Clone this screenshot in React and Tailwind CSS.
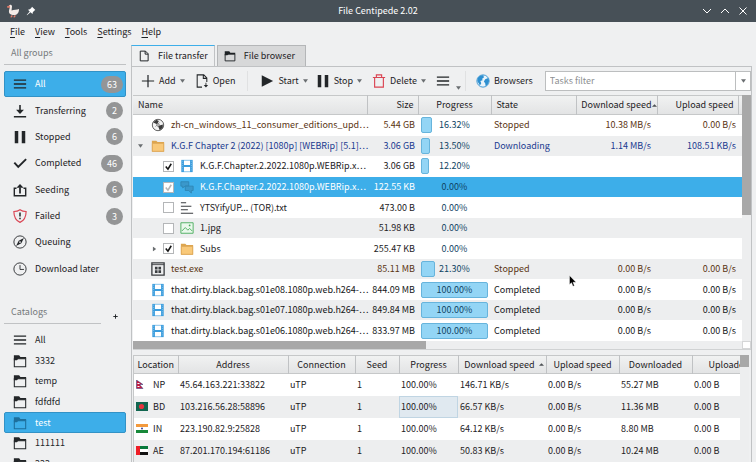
import { useState } from "react";

const groups = [
  { name: "All", icon: "menu", count: 63 },
  { name: "Transferring", icon: "download", count: 2 },
  { name: "Stopped", icon: "pause", count: 6 },
  { name: "Completed", icon: "check", count: 46 },
  { name: "Seeding", icon: "seed", count: 6 },
  { name: "Failed", icon: "shield", count: 3 },
  { name: "Queuing", icon: "compass" },
  { name: "Download later", icon: "clock" },
];

const catalogs = ["All", "3332", "temp", "fdfdfd", "test", "111111", "222"];

const tasks = [
  { name: "zh-cn_windows_11_consumer_editions_upd⋯", icon: "disc", size: "5.44 GB", progress: 16.32, state: "Stopped", down: "10.38 MB/s", up: "0.00 B/s" },
  { name: "K.G.F Chapter 2 (2022) [1080p] [WEBRip] [5.1]⋯", icon: "folder", size: "3.06 GB", progress: 13.5, state: "Downloading", down: "1.14 MB/s", up: "108.51 KB/s", arrow: "open" },
  { name: "K.G.F.Chapter.2.2022.1080p.WEBRip.x⋯", icon: "film", size: "3.06 GB", progress: 12.2, child: true, checked: true },
  { name: "K.G.F.Chapter.2.2022.1080p.WEBRip.x⋯", icon: "subtitle", size: "122.55 KB", progress: 0, child: true, checked: true, selected: true },
  { name: "YTSYifyUP... (TOR).txt", icon: "text", size: "473.00 B", progress: 0, child: true },
  { name: "1.jpg", icon: "image", size: "51.98 KB", progress: 0, child: true },
  { name: "Subs", icon: "folder", size: "255.47 KB", progress: 0, child: true, checked: true, arrow: "closed" },
  { name: "test.exe", icon: "exe", size: "85.11 MB", progress: 21.3, state: "Stopped", down: "0.00 B/s", up: "0.00 B/s" },
  { name: "that.dirty.black.bag.s01e08.1080p.web.h264-⋯", icon: "film", size: "844.09 MB", progress: 100, state: "Completed", down: "0.00 B/s", up: "0.00 B/s" },
  { name: "that.dirty.black.bag.s01e07.1080p.web.h264-⋯", icon: "film", size: "849.84 MB", progress: 100, state: "Completed", down: "0.00 B/s", up: "0.00 B/s" },
  { name: "that.dirty.black.bag.s01e06.1080p.web.h264-⋯", icon: "film", size: "833.97 MB", progress: 100, state: "Completed", down: "0.00 B/s", up: "0.00 B/s" },
];

const peers = [
  { code: "NP", address: "45.64.163.221:33822", down: "146.71 KB/s", total: "55.27 MB" },
  { code: "BD", address: "103.216.56.28:58896", down: "66.57 KB/s", total: "11.36 MB" },
  { code: "IN", address: "223.190.82.9:25828", down: "64.12 KB/s", total: "8.80 MB" },
  { code: "AE", address: "87.201.170.194:61186", down: "50.83 KB/s", total: "10.24 MB" },
];

const stateColors = {
  Stopped: "text-[#5a3412]",
  Downloading: "text-[#1a3a90]",
  Completed: "text-[#141618]",
};

const shapes = {
  menu: <path d="M1 3.5h14M1 8h14M1 12.5h14" strokeWidth="1.5" />,
  download: (
    <>
      <path d="M8 1v6M1 14.5h14" strokeWidth="1.8" />
      <path d="M3.5 6.5h9L8 11.5z" fill="currentColor" stroke="none" />
    </>
  ),
  pause: <path d="M2 1h4v14H2zM10 1h4v14h-4z" fill="currentColor" stroke="none" />,
  check: <path d="M1.5 7.5L6 12.5 15 3.5" strokeWidth="2.2" />,
  seed: (
    <>
      <path d="M4 6H1.5v8.5h13V6H12" strokeWidth="1.6" />
      <path d="M8 12V5" strokeWidth="2" />
      <path d="M4 5.5L8 1l4 4.5z" fill="currentColor" stroke="none" />
    </>
  ),
  shield: (
    <>
      <path d="M8 .8c2 1.4 4.2 2 7 2 0 6-1.5 10-7 12.5C2.5 12.8 1 8.8 1 2.8c2.8 0 5-.6 7-2z" stroke="#da4453" strokeWidth="1.3" />
      <path d="M8 4v4.5M8 10v1.8" strokeWidth="1.7" />
    </>
  ),
  compass: (
    <>
      <circle cx="8" cy="8" r="7" />
      <path d="M12.5 3.5L9.5 9.5 3.5 12.5 6.5 6.5z" fill="currentColor" stroke="none" />
      <circle cx="8" cy="8" r="1" fill="#eff0f1" stroke="none" />
    </>
  ),
  clock: (
    <>
      <circle cx="8" cy="8" r="7" />
      <path d="M8 3.5V8.5h4.5" />
    </>
  ),
  catalog: (
    <>
      <path d="M1.5 5.5h13v9h-13z" strokeWidth="1.2" />
      <path d="M1 1.5h6l1.5 2H15v2H6L4.5 7H1z" fill="currentColor" stroke="none" />
    </>
  ),
  page: <path d="M3 1.5h7l3.5 3.5v9.5H3zM9.5 1.5v4h4" strokeWidth="1.3" />,
  open: (
    <>
      <path d="M8 15H2.5V1H10l3.5 3.5V9M9.5 1v4h4" strokeWidth="1.2" />
      <path d="M10 12.5h5L12.5 15.5zM12 10h1v3h-1z" fill="currentColor" stroke="none" />
    </>
  ),
  plus: <path d="M8 1v14M1 8h14" strokeWidth="1.4" />,
  plusBold: <path d="M8 1v14M1 8h14" strokeWidth="3" />,
  play: <path d="M2 1.5L15 8 2 14.5z" fill="currentColor" stroke="none" />,
  trash: <path d="M1 4h14M5 4V1h6v3M3 4v11h10V4" stroke="#da4453" strokeWidth="1.3" />,
  globe: (
    <>
      <circle cx="8" cy="8" r="7" fill="#e9f4fb" stroke="#2d8fd0" />
      <path d="M2 4.5C4 1.5 7 1 8.5 1.5L9 4 7 5.5 7.5 7 5 8 6 10.5 4.5 13 3 10.5 1.5 8zM10.5 6L14 4.5l1 3.5-2 4.5-2 1.5-.5-3.5L9 8.5z" fill="#2d8fd0" stroke="none" />
    </>
  ),
  disc: (
    <>
      <circle cx="8" cy="8" r="6.5" fill="#f4f4f4" stroke="#4d4d4d" />
      <path d="M2.5 5L6 2l3 1.5L7 7zM8 9l5.5-1.5L13.5 11 10 14z" fill="#3a3a3a" stroke="none" />
      <path d="M5 10l5-5" stroke="#888" strokeWidth=".8" />
      <circle cx="8" cy="8" r="1.5" fill="#ddd" stroke="#666" strokeWidth=".8" />
    </>
  ),
  folder: (
    <>
      <path d="M1 2h5l1.5 1.5H15v11H1z" fill="#dda64f" stroke="none" />
      <path d="M1.5 5h13v9h-13z" fill="#f9c979" stroke="#dba557" strokeWidth=".8" />
    </>
  ),
  film: (
    <>
      <path d="M1.5 1h13v14h-13z" fill="#3b9ddd" stroke="none" />
      <path d="M4.5 1.8h7v5h-7zM4.5 9.2h7v5h-7z" fill="#fff" stroke="none" />
      <path d="M3 2v12M13 2v12" stroke="#9fd0f0" strokeWidth=".8" strokeDasharray="1 1.5" />
    </>
  ),
  subtitle: (
    <g fill="#3a98cb" stroke="#2f86b4">
      <path d="M1 2h9v5H6L3 9V7H1z" />
      <path d="M6 7h9v5h-2v3l-3-3H6z" />
    </g>
  ),
  text: <path d="M1 2h6M1 6h12M1 10h8M1 14h14" strokeWidth="1.2" />,
  image: (
    <>
      <path d="M1 2h14v12H1z" fill="#eaf8ec" stroke="#44aa57" />
      <path d="M2 11.5l4-4 3 3 2-2 3 3" stroke="#44aa57" />
      <circle cx="11" cy="5" r="1" fill="#44aa57" stroke="none" />
    </>
  ),
  exe: (
    <>
      <path d="M1 1h14v14H1z" strokeWidth="1.5" />
      <path d="M1 3h14" />
      <path d="M4.5 5.5h3v3h-3zM8.5 5.5h3v3h-3zM4.5 9.5h3v3h-3zM8.5 9.5h3v3h-3z" fill="currentColor" stroke="none" />
    </>
  ),
};

const Icon = ({ name, className = "size-3" }) => (
  <svg viewBox="0 0 16 16" fill="none" stroke="currentColor" className={`shrink-0 ${className}`} aria-hidden="true">
    {shapes[name]}
  </svg>
);

const Caret = ({ className = "" }) => (
  <svg viewBox="0 0 6 4" className={`w-[5px] h-1 shrink-0 fill-[#6a6e71] ${className}`} aria-hidden="true">
    <path d="M0 0h6L3 4z" />
  </svg>
);

const Flag = ({ code }) => (
  <svg viewBox="0 0 12 9" className="w-3 h-[9px] shrink-0" aria-hidden="true">
    {code === "NP" && (
      <>
        <path d="M.5 0L7 4.5H3.5L7 8.5H.5z" fill="#c8183c" stroke="#233a80" strokeWidth=".5" />
        <path d="M1.5 3h2v1h-2zM1.5 6h2v1h-2z" fill="#fff" />
      </>
    )}
    {code === "BD" && (
      <>
        <path d="M0 0h12v9H0z" fill="#116650" />
        <circle cx="5.5" cy="4.5" r="2.6" fill="#e5343f" />
      </>
    )}
    {code === "IN" && (
      <>
        <path d="M0 0h12v3H0z" fill="#f39a3d" />
        <path d="M0 3h12v3H0z" fill="#fff" />
        <path d="M0 6h12v3H0z" fill="#18893a" />
        <circle cx="6" cy="4.5" r=".9" fill="#26308a" />
      </>
    )}
    {code === "AE" && (
      <>
        <path d="M0 0h12v3H0z" fill="#087a3c" />
        <path d="M0 3h12v3H0z" fill="#fff" />
        <path d="M0 6h12v3H0z" fill="#111" />
        <path d="M0 0h4v9H0z" fill="#ee1c25" />
      </>
    )}
  </svg>
);

const TitleBar = () => (
  <header className="grid grid-cols-[1fr_auto_1fr] items-center h-[22px] shrink-0 px-1.5 bg-[#475057] text-white">
    <div className="flex items-center gap-1.5">
      <svg viewBox="0 0 14 14" className="size-3.5" aria-hidden="true">
        <path d="M3 1.5C4 .3 6 .8 6 2.5L5.5 6.5C8 5.5 11 6 13 5c0 4-2 6-5 6-3.5 0-5.500-1.5-5-4.5L3.8 3.5z" fill="#f5ece8" />
        <path d="M3.5 1.8L1 3l2.5.6zM6 11v2H4.5M9 11v2H7.5" fill="#e8806c" stroke="#e8806c" strokeWidth=".7" />
      </svg>
      <svg viewBox="0 0 10 10" className="size-2.5" fill="#fff" aria-hidden="true">
        <path d="M6 .8L9.3 4 8.2 4.8 6.8 6.2 6.5 8 4.5 6.3 1 9.3.7 9 3.7 5.5 2 3.7l1.8-.4L5.3 2z" />
      </svg>
    </div>
    <h1>File Centipede 2.02</h1>
    <div className="flex justify-end gap-2 pr-0.5">
      {[
        ["Minimize", "M1 3l4 4 4-4"],
        ["Maximize", "M1 7l4-4 4 4"],
        ["Close", "M1.5 1.5l7 7M8.5 1.5l-7 7"],
      ].map(([label, d]) => (
        <button key={label} aria-label={label}>
          <svg viewBox="0 0 10 10" className="size-2.5 fill-none stroke-current">
            <path d={d} />
          </svg>
        </button>
      ))}
    </div>
  </header>
);

const MenuBar = () => (
  <nav className="flex items-center gap-2.5 h-5 shrink-0 px-2.5">
    {["File", "View", "Tools", "Settings", "Help"].map((item) => (
      <button key={item}>
        <span className="underline underline-offset-2">{item[0]}</span>
        {item.slice(1)}
      </button>
    ))}
  </nav>
);

const Sidebar = () => {
  const [group, setGroup] = useState("All");
  const [catalog, setCatalog] = useState("test");

  return (
    <aside className="flex flex-col w-[131px] shrink-0 pl-1 pr-[5px] overflow-hidden">
      <h2 className="h-[23px] shrink-0 pl-[7px] leading-[22px] border-b border-[#c0c2c4] text-[#75797c]">
        All groups
      </h2>
      <ul className="grid grid-rows-8 h-[211px] shrink-0 mt-1.5">
        {groups.map((item) => (
          <li key={item.name}>
            <button
              onClick={() => setGroup(item.name)}
              className={`flex items-center w-full h-full pl-2 pr-0.5 rounded-xs border ${
                group === item.name
                  ? "bg-[#3daee9] border-[#3292c6]"
                  : "border-transparent"
              }`}
            >
              <Icon name={item.icon} className="size-3.5 text-[#232629]" />
              <span className={`ml-2 ${group === item.name ? "text-white" : ""}`}>
                {item.name}
              </span>
              {item.count && (
                <span className="ml-auto min-w-[17px] h-[17px] px-1.5 rounded-full bg-[#949596] text-white text-center leading-[17px]">
                  {item.count}
                </span>
              )}
            </button>
          </li>
        ))}
      </ul>
      <div className="flex items-end mt-5 shrink-0">
        <h2 className="w-[97px] h-[22px] pl-[7px] leading-5 border-b border-[#c0c2c4] text-[#75797c]">
          Catalogs
        </h2>
        <button aria-label="Add catalog" className="flex ml-3 mb-[5px]">
          <Icon name="plusBold" className="size-[5px]" />
        </button>
      </div>
      <ul className="grid grid-rows-7 h-[144px] mt-1.5 shrink-0">
        {catalogs.map((name) => (
          <li key={name}>
            <button
              onClick={() => setCatalog(name)}
              className={`flex items-center w-full h-full pl-2 rounded-xs border ${
                catalog === name
                  ? "bg-[#3daee9] border-[#3292c6] text-[#1d6f9c]"
                  : "border-transparent text-[#232629]"
              }`}
            >
              <Icon name={name === "All" ? "menu" : "catalog"} className="size-3.5" />
              <span className={`ml-2 ${catalog === name ? "text-white" : ""}`}>
                {name}
              </span>
            </button>
          </li>
        ))}
      </ul>
    </aside>
  );
};

const ToolButton = ({ icon, label, caret, className = "" }) => (
  <button className={`flex items-center shrink-0 gap-1 ${className}`}>
    <Icon name={icon} className="size-3.5 text-[#232629]" />
    <span>{label}</span>
    {caret && <Caret />}
  </button>
);

const Toolbar = () => (
  <div className="flex items-center h-7 shrink-0 pl-2">
    <ToolButton icon="plus" label="Add" caret />
    <ToolButton icon="open" label="Open" className="ml-2.5" />
    <div className="w-px h-5 mx-3 bg-[#e0e1e2]" />
    <ToolButton icon="play" label="Start" caret />
    <ToolButton icon="pause" label="Stop" caret className="ml-2" />
    <ToolButton icon="trash" label="Delete" caret className="ml-2.5" />
    <button aria-label="More" className="flex items-end gap-1.5 ml-2.5">
      <Icon name="menu" className="size-3.5 text-[#232629]" />
      <Caret className="translate-y-0.5" />
    </button>
    <div className="w-px h-5 ml-1 mr-2.5 bg-[#e0e1e2]" />
    <ToolButton icon="globe" label="Browsers" />
    <div className="flex flex-1 min-w-0 h-5 ml-3 border border-[#bcbebf] bg-white">
      <input
        aria-label="Tasks filter"
        placeholder="Tasks filter"
        className="flex-1 min-w-0 px-1 outline-none placeholder:text-[#8e9092]"
      />
      <button aria-label="Show filters" className="flex items-center justify-center w-[15px] border-l border-[#bcbebf]">
        <Caret />
      </button>
    </div>
  </div>
);

const CheckBox = ({ label, defaultChecked, dim }) => (
  <span className="relative inline-flex shrink-0">
    <input
      type="checkbox"
      aria-label={label}
      defaultChecked={defaultChecked}
      className="peer appearance-none size-[11px] border border-[#b4b6b8] bg-white"
    />
    <svg
      viewBox="0 0 10 10"
      className={`absolute inset-0 size-[11px] fill-none invisible pointer-events-none peer-checked:visible ${
        dim ? "stroke-[#b5b5b5]" : "stroke-[#151515]"
      }`}
    >
      <path d="M2.5 5l2 2.5L7.5 2.5" strokeWidth="1.4" />
    </svg>
  </span>
);

const SortMark = () => (
  <svg viewBox="0 0 6 3" className="w-[5px] h-[3px] shrink-0 fill-[#4d5154]" aria-hidden="true">
    <path d="M0 3h6L3 0z" />
  </svg>
);

const headCell = "font-normal border-r border-[#c0c2c4] overflow-hidden whitespace-nowrap";

const TaskRow = ({ task, odd }) => {
  const color = task.child ? "" : stateColors[task.state];
  let bg = odd ? "bg-[#edeeef]" : "bg-white";
  if (task.selected) bg = "bg-[#3daee9] text-white";

  return (
    <tr className={`${bg} ${color}`}>
      <td>
        <div className={`flex items-center whitespace-nowrap ${task.child ? "pl-[18px]" : "pl-1"}`}>
          <span className={`flex justify-center w-1.5 shrink-0 ${task.child ? "mr-1.5" : "mr-2"}`}>
            {task.arrow && <Caret className={task.arrow === "closed" ? "-rotate-90" : ""} />}
          </span>
          {task.child && (
            <CheckBox label={`Download ${task.name}`} defaultChecked={task.checked} dim={task.selected} />
          )}
          <Icon name={task.icon} className={`size-3.5 text-[#3a3d40] mr-1.5 ${task.child ? "ml-1.5" : ""}`} />
          <span>{task.name}</span>
        </div>
      </td>
      <td className="text-right pr-[3px] whitespace-nowrap">{task.size}</td>
      <td className="px-[3px]">
        <div className="relative h-4">
          {task.progress > 0 && (
            <div
              className="h-full bg-[#93d5f5] border border-[#67b4dc] rounded-xs"
              style={{ width: `${task.progress}%` }}
            />
          )}
          <span className="absolute inset-0 text-center leading-4 text-[#0f4463]">
            {task.progress.toFixed(2)}%
          </span>
        </div>
      </td>
      <td className="pl-[3px]">{task.state}</td>
      <td className="text-right pr-1.5">{task.down}</td>
      <td className="text-right pr-1.5" colSpan={2}>{task.up}</td>
    </tr>
  );
};

const TaskTable = () => (
  <div className="shrink-0">
    <div className="flex">
      <table className="table-fixed flex-1 w-0 h-[246px] border-collapse">
        <colgroup>
          <col />
          <col className="w-[51px]" />
          <col className="w-[73px]" />
          <col className="w-[85px]" />
          <col className="w-[81px]" />
          <col className="w-[81px]" />
          <col className="w-1" />
        </colgroup>
        <thead className="bg-linear-to-b from-[#f1f2f2] to-[#e2e3e4]">
          <tr className="h-[19px] border-y border-[#c6c8c9]">
            <th className={`${headCell} text-left pl-[5px]`}>Name</th>
            <th className={`${headCell} text-right pr-1`}>Size</th>
            <th className={headCell}>Progress</th>
            <th className={`${headCell} text-left pl-[5px]`}>State</th>
            <th className={headCell}>
              <div className="flex items-center justify-end">
                Download speed
                <SortMark />
              </div>
            </th>
            <th className={`${headCell} text-right pr-1`}>Upload speed</th>
            <th />
          </tr>
        </thead>
        <tbody>
          {tasks.map((task, i) => (
            <TaskRow key={i} task={task} odd={i % 2 === 1} />
          ))}
        </tbody>
      </table>
      <div className="w-[9px] bg-[#edeeef]">
        <div className="h-[120px] bg-[#a8a8a8]" />
      </div>
    </div>
    <div className="flex h-[9px] bg-[#edeeef] border-b border-[#d0d2d3]">
      <div className="w-[293px] bg-[#a8a8a8]" />
      <div className="w-[9px] ml-auto bg-white border border-[#d5d6d7]" />
    </div>
  </div>
);

const PeerTable = () => (
  <div className="flex flex-1 min-h-0 mt-[5px] mr-0.5 border-l border-[#c6c8c9] overflow-hidden">
    <div className="flex-1 overflow-hidden">
      <table className="table-fixed w-full border-collapse">
        <colgroup>
          <col className="w-11" />
          <col />
          <col className="w-[67px]" />
          <col className="w-11" />
          <col className="w-[59px]" />
          <col className="w-[88px]" />
          <col className="w-[73px]" />
          <col className="w-[73px]" />
          <col className="w-12" />
        </colgroup>
        <thead className="bg-linear-to-b from-[#f1f2f2] to-[#e2e3e4]">
          <tr className="h-[18px] border-y border-[#c6c8c9]">
            <th className={headCell}>Location</th>
            <th className={headCell}>Address</th>
            <th className={headCell}>Connection</th>
            <th className={headCell}>Seed</th>
            <th className={headCell}>Progress</th>
            <th className={headCell}>
              <div className="flex items-center justify-end gap-1 pr-0.5">
                Download speed
                <SortMark />
              </div>
            </th>
            <th className={headCell}>Upload speed</th>
            <th className={headCell}>Downloaded</th>
            <th className="font-normal overflow-hidden whitespace-nowrap text-left pl-4">Uploaded</th>
          </tr>
        </thead>
        <tbody>
          {peers.map((peer, i) => (
            <tr key={peer.code} className={`h-[22px] ${i % 2 ? "bg-[#edeeef]" : "bg-white"}`}>
              <td>
                <div className="flex items-center gap-[5px] pl-0.5">
                  <Flag code={peer.code} />
                  {peer.code}
                </div>
              </td>
              <td className="pl-0.5 whitespace-nowrap">{peer.address}</td>
              <td className="pl-0.5">uTP</td>
              <td className="pl-0.5">1</td>
              <td className={`pl-0.5 ${peer.code === "BD" ? "bg-[#e0e9f0] outline -outline-offset-1 outline-[#c0d5e3]" : ""}`}>
                100.00%
              </td>
              <td className="pl-0.5">{peer.down}</td>
              <td className="pl-0.5">0.00 B/s</td>
              <td className="pl-0.5">{peer.total}</td>
              <td className="pl-0.5">0.00 B</td>
            </tr>
          ))}
        </tbody>
      </table>
    </div>
    <div className="w-[9px] bg-[#edeeef]">
      <div className="h-3 bg-[#a8a8a8]" />
    </div>
  </div>
);

const App = () => {
  const [tab, setTab] = useState("File transfer");

  return (
    <div className="relative flex flex-col h-screen overflow-hidden bg-[#eff0f1] text-[#1d2124] text-[9px] leading-4 font-[family-name:'Noto_Sans_CJK_SC',sans-serif]">
      <TitleBar />
      <MenuBar />
      <div className="flex flex-1 min-h-0">
        <Sidebar />
        <main className="flex flex-col flex-1 min-w-0 pt-[3px] pr-1">
          <div role="tablist" className="flex shrink-0">
            {["File transfer", "File browser"].map((name) => (
              <button
                key={name}
                role="tab"
                aria-selected={tab === name}
                onClick={() => setTab(name)}
                className={`flex items-center gap-2 h-[21px] pl-1.5 border-x border-t ${
                  tab === name
                    ? "pr-1.5 border-x-[#c0c2c4] border-t-[#3daee9] bg-[#eff0f1]"
                    : "ml-0.5 pr-2.5 border-[#b4b6b8] bg-[#d7d8d9]"
                }`}
              >
                <Icon name={name === "File transfer" ? "page" : "catalog"} className="size-3" />
                {name}
              </button>
            ))}
          </div>
          <div className="flex flex-col flex-1 min-h-0 border-x border-t border-[#c0c2c4] pl-px">
            <Toolbar />
            <TaskTable />
            <PeerTable />
          </div>
        </main>
      </div>
      <svg viewBox="0 0 8 12" className="absolute left-[569px] top-[275px] w-2 h-3" aria-hidden="true">
        <path d="M.5.5v9l2-1.8 1.5 3.6 1.4-.6L4 7.3h3z" fill="#000" stroke="#fff" strokeWidth=".4" />
      </svg>
    </div>
  );
};

export default App;
